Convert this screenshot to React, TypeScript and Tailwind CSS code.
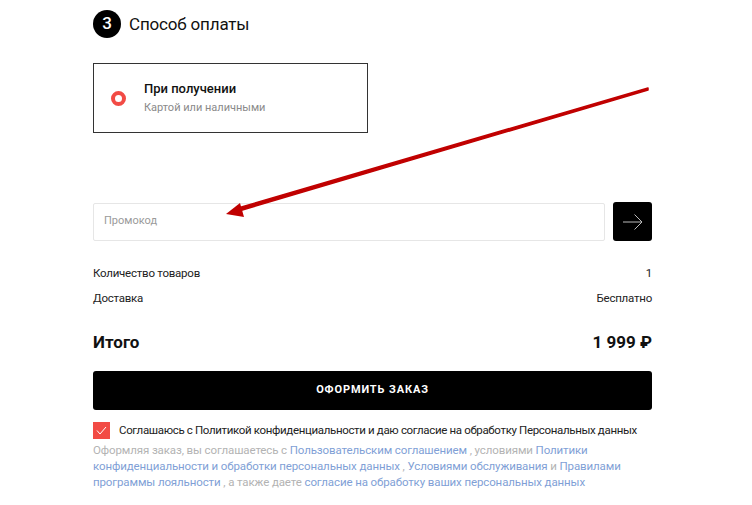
import React from 'react';

const font = { fontFamily: 'Roboto, "Liberation Sans", sans-serif' };

const Link: React.FC<{ children: React.ReactNode }> = ({ children }) => (
  <a href="#" className="text-[#7f9fd6]">
    {children}
  </a>
);

export default function App() {
  return (
    <div className="relative w-[752px] h-[505px] bg-white overflow-hidden text-[#222]" style={font}>
      <div className="ml-[93px] w-[559px] pt-[10px]">
        {/* Step header */}
        <div className="flex items-center gap-[8px] h-[28px]">
          <div className="w-[28px] h-[28px] rounded-full bg-black text-white flex items-center justify-center text-[17px] font-medium">
            3
          </div>
          <h2 className="text-[17px] leading-none text-[#111] tracking-[-0.01em]">Способ оплаты</h2>
        </div>

        {/* Payment option */}
        <div className="mt-[25px] w-[275px] h-[70px] border border-[#333] flex items-center pl-[17px]">
          <div className="w-[15px] h-[15px] rounded-full border-[4px] border-[#f24b45]" />
          <div className="ml-[18px] flex flex-col">
            <span className="text-[13px] font-medium leading-[16px] text-[#111]">При получении</span>
            <span className="mt-[4px] text-[11px] leading-[14px] text-[#8a8a8a]">Картой или наличными</span>
          </div>
        </div>

        {/* Promo code */}
        <div className="mt-[69px] flex items-center gap-[8px]">
          <div className="flex-1 h-[38px] border border-[#e6e6e6] rounded-[2px] flex items-center px-[10px]">
            <span className="text-[11px] text-[#9a9a9a]">Промокод</span>
          </div>
          <button className="w-[39px] h-[39px] bg-black rounded-[3px] flex items-center justify-center">
            <svg width="20" height="16" viewBox="0 0 20 16" fill="none" stroke="#bbb" strokeWidth="1">
              <path d="M0 8h19M11.5 0.5l7.5 7.5-7.5 7.5" />
            </svg>
          </button>
        </div>

        {/* Summary */}
        <div className="mt-[22px] flex justify-between text-[11.5px] tracking-[-0.02em] leading-[20px] text-[#222]">
          <span>Количество товаров</span>
          <span>1</span>
        </div>
        <div className="mt-[5px] flex justify-between text-[11.5px] tracking-[-0.02em] leading-[20px] text-[#222]">
          <span>Доставка</span>
          <span>Бесплатно</span>
        </div>
        <div className="mt-[22px] flex justify-between text-[17px] font-bold leading-[24px] text-[#111]">
          <span>Итого</span>
          <span>1 999 ₽</span>
        </div>

        {/* Submit */}
        <button className="mt-[17px] w-full h-[39px] bg-black rounded-[3px] text-white text-[11px] font-bold tracking-[0.08em]">
          ОФОРМИТЬ ЗАКАЗ
        </button>

        {/* Agreement */}
        <div className="mt-[12px] flex items-center gap-[9px]">
          <div className="w-[17px] h-[17px] shrink-0 bg-[#f24b45] flex items-center justify-center">
            <svg width="11" height="9" viewBox="0 0 11 9" fill="none" stroke="white" strokeWidth="1">
              <path d="M1 4.5l3 3.5L10 1" />
            </svg>
          </div>
          <span className="text-[11.5px] tracking-[-0.03em] whitespace-nowrap text-[#222]">
            Соглашаюсь с Политикой конфиденциальности и даю согласие на обработку Персональных данных
          </span>
        </div>
        <p className="mt-[3px] text-[11.5px] tracking-[-0.01em] leading-[16px] text-[#b3b3b3]">
          Оформляя заказ, вы соглашаетесь с <Link>Пользовательским соглашением</Link> , условиями{' '}
          <Link>Политики конфиденциальности и обработки персональных данных</Link> ,{' '}
          <Link>Условиями обслуживания</Link> и <Link>Правилами программы лояльности</Link> , а также даете{' '}
          <Link>согласие на обработку ваших персональных данных</Link>
        </p>
      </div>

      {/* Annotation arrow */}
      <svg className="absolute left-0 top-0 pointer-events-none" width="752" height="505" viewBox="0 0 752 505">
        <path d="M648 88 L238 208 L239 211 L648 90 Z" fill="#c00000" stroke="#c00000" strokeWidth="1.5" strokeLinejoin="round" />
        <path d="M226 214 L240 203 L244 217 Z" fill="#c00000" />
      </svg>
    </div>
  );
}
